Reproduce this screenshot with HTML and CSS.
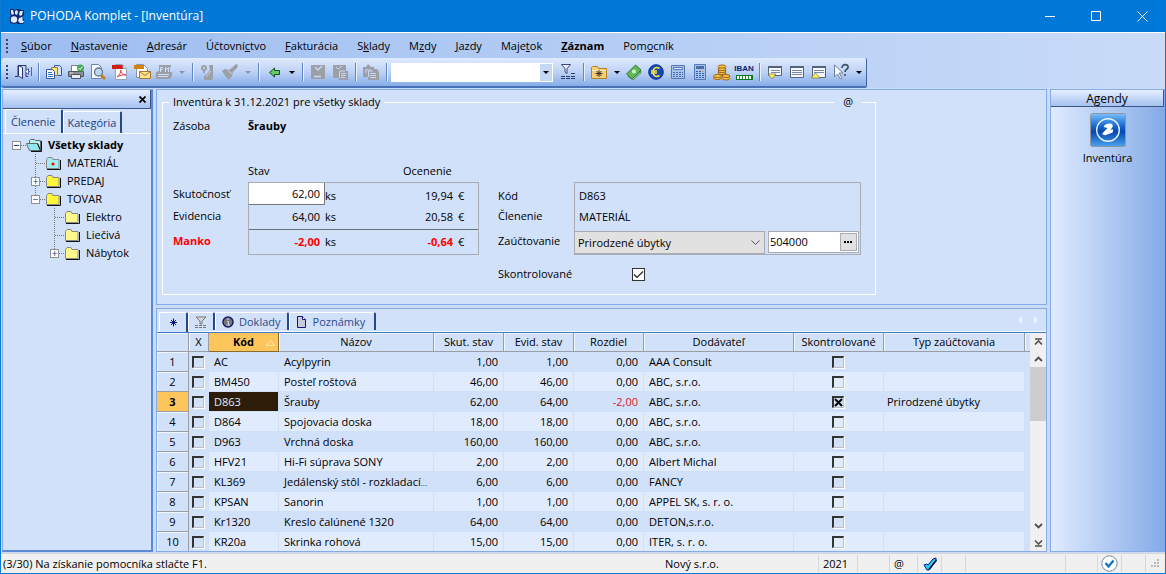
FILE: index.html
```html
<!DOCTYPE html>
<html lang="sk">
<head>
<meta charset="utf-8">
<title>POHODA Komplet - [Inventúra]</title>
<link rel="stylesheet" href="styles.css">
</head>
<body>
<header class="titlebar">
  <svg class="logo" viewBox="0 0 16 16"><path fill="#12286e" d="M1 1h4l1 2 1-2h4l1 1h3v5l-2 2 2 2v3l-1 2H8v-1l-3 1-4-1V9l1-1-1-3z"/><circle cx="5" cy="11.500" r="3.200" fill="#dceaff"/><path fill="#dceaff" d="M2 2h2l1 4-2 1-1-2zM6 3l2-1 1 2-1 3-2-1zM11 3l3 0-1 4-2 1-1-2zM10 10l3-1 1 2-1 1 2 1-1 2h-3l-2-2z"/></svg>
  <h1 class="title">POHODA Komplet - [Inventúra]</h1>
  <div class="window-buttons">
    <button aria-label="Minimalizovať"><svg viewBox="0 0 11 11"><path d="M0 5.500h10" stroke="#fff"/></svg></button>
    <button aria-label="Maximalizovať"><svg viewBox="0 0 11 11"><path d="M.5.5h9v9h-9z" stroke="#fff" fill="none"/></svg></button>
    <button aria-label="Zavrieť"><svg viewBox="0 0 11 11"><path d="M.5.5l10 10M10.500.5l-10 10" stroke="#fff"/></svg></button>
  </div>
</header>

<nav class="menubar">
  <span class="grip"></span>
  <button><u>S</u>úbor</button>
  <button><u>N</u>astavenie</button>
  <button><u>A</u>dresár</button>
  <button>Účtovní<u>c</u>tvo</button>
  <button><u>F</u>akturácia</button>
  <button>S<u>k</u>lady</button>
  <button>M<u>z</u>dy</button>
  <button><u>J</u>azdy</button>
  <button>Maje<u>t</u>ok</button>
  <button class="strong"><u>Z</u>áznam</button>
  <button>Pom<u>o</u>cník</button>
</nav>

<div class="toolbar" role="toolbar">
  <span class="grip"></span>
  <button aria-label="Koniec"><svg viewBox="0 0 18 18"><path d="M1 13.500h3V2.500h8v11h2" fill="none" stroke="#2f3474"/><path d="M4.500 2.500l4 2v11l-4-2.500z" fill="#f4f8ff" stroke="#2f3474"/><path d="M17.500 4v9M16 8.500h-2M14.500 5.500v6l-3.500-3z" fill="#fff" stroke="#4d639c"/></svg></button>
  <span class="sep"></span>
  <button aria-label="Kopírovať"><svg viewBox="0 0 18 18"><path d="M9.500 2.500h5l2 2v8h-7z" fill="#cfe2ff" stroke="#36569b"/><path d="M6.500 4.500h6v8h-6z" fill="#ffe36b" stroke="#97853a"/><path d="M1.500 6.500h6l2 2v7h-8z" fill="#fff" stroke="#36569b"/><path d="M3 9.500h4M3 11.500h5M3 13.500h5" stroke="#2c71d0"/></svg></button>
  <button aria-label="Tlač"><svg viewBox="0 0 18 18"><path d="M4.500 8V2.500h8V8" fill="#fff" stroke="#7a7d86"/><path d="M1.500 8.500h15v5h-15z" fill="#8d9098" stroke="#53565e"/><path d="M4.500 11.500h9v4h-9z" fill="#e8edf5" stroke="#53565e"/><path d="M3 10h3" stroke="#ddd"/><circle cx="13.500" cy="5" r="3.500" fill="#43aa50"/><path d="M11.500 5l1.500 1.500 2.500-3" fill="none" stroke="#fff"/></svg></button>
  <button aria-label="Náhľad"><svg viewBox="0 0 18 18"><path d="M2.500 1.500h7l3 3v11h-10z" fill="#f4f8ff" stroke="#7186ad"/><path d="M12 12l4 4" stroke="#c87f18" stroke-width="2.600"/><circle cx="9.500" cy="9" r="4" fill="#b9daf5" stroke="#687489" stroke-width="1.300"/></svg></button>
  <button aria-label="PDF"><svg viewBox="0 0 18 18"><path d="M4.500 1.500h7l4 4v11h-11z" fill="#fff" stroke="#94a3be"/><path d="M1 2h11v4H1z" fill="#d21c17"/><path d="M12 2v3.500h3.500" fill="#d9dde7" stroke="#94a3be"/><path d="M6 14c3-2 4-5 3.500-7 .5 3 3 5 5.500 5-4-.5-6 .5-9 2z" fill="none" stroke="#df3c45"/></svg></button>
  <button aria-label="Pošta"><svg viewBox="0 0 18 18"><path d="M3.500 1.500h7l4 4v9h-11z" fill="#fff" stroke="#8594b2"/><path d="M1 2h10v4H1z" fill="#d2820d"/><path d="M6.500 8.500h11v7h-11z" fill="#ffe38a" stroke="#a37730"/><path d="M6.500 8.500l5.500 4 5.500-4" fill="none" stroke="#a37730"/></svg></button>
  <button aria-label="Fiškálna tlačiareň" disabled><svg viewBox="0 0 18 18"><path d="M4 2h12v2h-1v5h2v4l-2 3H2l-1-1V9l3-1z" fill="#9c9fa6"/><path d="M5.500 9V4.500H8M5.500 6.500H8M10.500 9V4.500l1.500 2 1.500-2V9M3 11.500h11M3 13.500h10" fill="none" stroke="#d2dff5"/></svg></button>
  <button class="caret off" aria-label="Ďalšie"></button>
  <span class="sep"></span>
  <button aria-label="Akcia" disabled><svg viewBox="0 0 18 18"><circle cx="5" cy="5" r="3" fill="#9c9fa6"/><path d="M4 7h2v3H4zM10 2h4v13l-1 2H5v-4l3-2 3-4z" fill="#9c9fa6"/><circle cx="5" cy="5" r="1" fill="#d2dff5"/><path d="M7 14l5-6" stroke="#c2d4f1"/></svg></button>
  <button aria-label="Upraviť" disabled><svg viewBox="0 0 18 18"><path d="M1 8l3-2 4 1 5-4 2-2 2 1-1 3-4 4-1 4-3 4-3-3z" fill="#9c9fa6"/><path d="M7 8l4 3" stroke="#c2d4f1"/></svg></button>
  <button class="caret off" aria-label="Ďalšie"></button>
  <span class="sep"></span>
  <button aria-label="Späť"><svg viewBox="0 0 18 18"><path d="M4.500 9.500L9.500 5v2.500h5v4h-5V14z" fill="#64c968" stroke="#14501c"/></svg></button>
  <button class="caret" aria-label="História"></button>
  <span class="sep"></span>
  <button aria-label="Uložiť" disabled><svg viewBox="0 0 18 18"><path d="M2 2h14v14H2z" fill="#9c9fa6"/><path d="M6 4l3 3 4-4M5 13.500h7" fill="none" stroke="#c8d8f3" stroke-width="1.500"/></svg></button>
  <button aria-label="Uložiť kópiu" disabled><svg viewBox="0 0 18 18"><path d="M2 2h13v6h2v9H8v-2H2z" fill="#9c9fa6"/><path d="M5 4l2 2 4-3M8.500 15V8H14M10 10.500h5M10 12.500h5M10 14.500h4" fill="none" stroke="#c8d8f3"/></svg></button>
  <span class="sep"></span>
  <button aria-label="Prilepiť" disabled><svg viewBox="0 0 18 18"><path d="M1 4h3l2-3 3 3h3v2h3l2 3v8H6v-3H1z" fill="#9c9fa6"/><path d="M3 7h6M3 9h2M6.500 14V8H11M8 10.500h6M8 12.500h6M8 14.500h6" fill="none" stroke="#c8d8f3"/></svg></button>
  <span class="sep"></span>
  <select class="search" aria-label="Hľadať"><option></option></select>
  <button aria-label="Filter"><svg viewBox="0 0 18 18"><path d="M2.500 1.500h9l-3.500 4v5l-2-1.500V5.500z" fill="#eef4ff" stroke="#3f477f"/><path d="M2 13.500h4M7 13.500h4M12 13.500h4M12 10.500h4M2 15.500h4M7 15.500h4M12 15.500h4" stroke="#31396f"/></svg></button>
  <span class="sep"></span>
  <button aria-label="Obľúbené"><svg viewBox="0 0 18 18"><path d="M1.500 4.500l1-1h5l1 2h8v10h-15z" fill="#f7cf72" stroke="#b5832c"/><path d="M2 7.500h14" stroke="#fff0b8"/><path d="M9 7v7M5.500 10.500h7M6.500 8l5 5M11.500 8l-5 5" stroke="#3b3034"/></svg></button>
  <button class="caret" aria-label="Ďalšie"></button>
  <button aria-label="Pokladňa"><svg viewBox="0 0 18 18"><path d="M1.500 11L10.500 2l5.500 5-9 9z" fill="#5fb95c" stroke="#2e7a38"/><path d="M3 12.500l4 3.500L16 8v2l-8 7-5-3.500z" fill="#8bcf80" stroke="#2e7a38" stroke-width=".6"/><circle cx="9" cy="8.500" r="2" fill="#d6f4c8"/></svg></button>
  <button aria-label="Euro"><svg viewBox="0 0 18 18"><circle cx="9" cy="9" r="7.300" fill="#1549ba" stroke="#0c2e8b"/><path d="M12.500 5.500C8.500 3 6 6 6 9s2.500 6 6.500 3.500M4 8h6M4 10h6" fill="none" stroke="#ffe53b" stroke-width="1.500"/></svg></button>
  <button aria-label="Kalkulačka"><svg viewBox="0 0 18 18"><path d="M2.500 2.500h13v13h-13z" fill="#a9c3ef" stroke="#5579b8"/><path d="M4.500 4.500h9v2h-9z" fill="#e8f1ff" stroke="#5579b8"/><path d="M4 9.500h10M4 11.500h10M4 13.500h10" stroke="#416bb0" stroke-dasharray="2 1"/></svg></button>
  <button aria-label="Počítadlo"><svg viewBox="0 0 18 18"><path d="M3.500 1.500h11v15h-11z" fill="#a9c3ef" stroke="#5579b8"/><path d="M5 3h8v3H5z" fill="#4f6f9e"/><path d="M5 8.500h8M5 10.500h8M5 12.500h8M5 14.500h8" stroke="#2e63af" stroke-dasharray="2 1"/><path d="M11 8.500h2" stroke="#e4a130"/></svg></button>
  <button aria-label="Mince"><svg viewBox="0 0 18 18"><g fill="#ffca43" stroke="#9a621a"><ellipse cx="4.500" cy="15" rx="4" ry="1.500"/><ellipse cx="4.500" cy="13" rx="4" ry="1.500"/><ellipse cx="9" cy="10" rx="4" ry="1.500"/><ellipse cx="9" cy="8" rx="4" ry="1.500"/><ellipse cx="9" cy="6" rx="4" ry="1.500"/><ellipse cx="9" cy="3.500" rx="4" ry="1.500"/><ellipse cx="13" cy="15.500" rx="4" ry="1.500"/><ellipse cx="13" cy="13" rx="4" ry="1.500"/></g></svg></button>
  <button class="iban" aria-label="Kontrola IBAN"><span>IBAN</span><i></i></button>
  <span class="sep"></span>
  <button aria-label="Panel dole"><svg viewBox="0 0 18 18"><path d="M2.500 3.500h13v9h-13z" fill="#f5f8ff" stroke="#56637d"/><path d="M2 4h14" stroke="#56637d" stroke-width="2"/><path d="M5 7.500h9M5 9.500h9" stroke="#7988a5"/><path d="M2 11h8l-4 5z" fill="#fff257" stroke="#6e7047" stroke-width=".7"/></svg></button>
  <button aria-label="Panel"><svg viewBox="0 0 18 18"><path d="M2.500 3.500h13v11h-13z" fill="#f5f8ff" stroke="#56637d"/><path d="M2 4h14" stroke="#56637d" stroke-width="2"/><path d="M4 7.500h10M4 9.500h10M4 11.500h10" stroke="#7988a5"/></svg></button>
  <button aria-label="Panel hore"><svg viewBox="0 0 18 18"><path d="M2.500 3.500h13v11h-13z" fill="#f5f8ff" stroke="#56637d"/><path d="M2 4h14" stroke="#56637d" stroke-width="2"/><path d="M4 7.500h10M4 9.500h10" stroke="#7988a5"/><path d="M1 15h9l-4.500-5z" fill="#fff257" stroke="#6e7047" stroke-width=".7"/></svg></button>
  <button aria-label="Pomocník"><svg viewBox="0 0 18 18"><path d="M2.500 2v12l3-3 3 5 1.500-1-3-5h4z" fill="#fff" stroke="#6f809e"/><path d="M10 5c0-5 7-4 6-.5-.5 2-3 2-3 4.500M13 11v2" fill="none" stroke="#3d5064" stroke-width="1.700"/></svg></button>
  <button class="caret" aria-label="Ďalšie"></button>
</div>

<main class="workspace">
  <aside class="tree-panel">
    <div class="panel-head"><button aria-label="Zavrieť panel"><svg viewBox="0 0 7 7"><path d="M.5.5l6 6M6.500.5l-6 6" stroke="#000" stroke-width="1.700"/></svg></button></div>
    <div class="side-tabs"><button class="active">Členenie</button><button>Kategória</button></div>
    <ul class="tree">
      <li class="strong"><span class="cell h"><button aria-label="Zbaliť">−</button></span><svg class="folder root" viewBox="0 0 17 14"><path d="M3.500 10V2.500l1-1h4l1 1h5V11" fill="#b5f0f5" stroke="#666"/><path d="M.5 5.500h11l3 7h-11z" fill="#8ee9f0" stroke="#666"/><path d="M15.500 3v10.500H5M11.500 5.500l3 7" fill="none" stroke="#111"/></svg>Všetky sklady</li>
      <li><span class="cell"></span><span class="cell v h"></span><svg class="folder" viewBox="0 0 17 14"><path d="M1.500 3.500l1.500-2h4l1 2h6v9h-12.500z" fill="#a3edf1" stroke="#888"/><path d="M15.500 4v9.500H2" fill="none" stroke="#111"/><circle cx="8" cy="8" r="1.600" fill="#f00"/></svg>MATERIÁL</li>
      <li><span class="cell"></span><span class="cell v h"><button aria-label="Rozbaliť">+</button></span><svg class="folder" viewBox="0 0 17 14"><path d="M1.500 3.500l1.500-2h4l1 2h6v9h-12.500z" fill="#fff63c" stroke="#888"/><path d="M15.500 4v9.500H2" fill="none" stroke="#111"/></svg>PREDAJ</li>
      <li><span class="cell"></span><span class="cell v h end"><button aria-label="Zbaliť">−</button></span><svg class="folder" viewBox="0 0 17 14"><path d="M1.500 3.500l1.500-2h4l1 2h6v9h-12.500z" fill="#fff63c" stroke="#888"/><path d="M15.500 4v9.500H2" fill="none" stroke="#111"/></svg>TOVAR</li>
      <li><span class="cell"></span><span class="cell"></span><span class="cell v h"></span><svg class="folder" viewBox="0 0 17 14"><path d="M1.500 3.500l1.500-2h4l1 2h6v9h-12.500z" fill="#fff98c" stroke="#888"/><path d="M15.500 4v9.500H2" fill="none" stroke="#111"/></svg>Elektro</li>
      <li><span class="cell"></span><span class="cell"></span><span class="cell v h"></span><svg class="folder" viewBox="0 0 17 14"><path d="M1.500 3.500l1.500-2h4l1 2h6v9h-12.500z" fill="#fff98c" stroke="#888"/><path d="M15.500 4v9.500H2" fill="none" stroke="#111"/></svg>Liečivá</li>
      <li><span class="cell"></span><span class="cell"></span><span class="cell v h end"><button aria-label="Rozbaliť">+</button></span><svg class="folder" viewBox="0 0 17 14"><path d="M1.500 3.500l1.500-2h4l1 2h6v9h-12.500z" fill="#fff98c" stroke="#888"/><path d="M15.500 4v9.500H2" fill="none" stroke="#111"/></svg>Nábytok</li>
    </ul>
  </aside>

  <section class="center">
    <form class="form-panel">
      <fieldset class="record">
        <legend>Inventúra k 31.12.2021 pre všetky sklady</legend>
        <span class="at">@</span>
        <div class="record-name"><span>Zásoba</span><strong>Šrauby</strong></div>
        <div class="record-heads"><span>Stav</span><span>Ocenenie</span></div>
        <div class="record-body">
          <div class="labels left"><label for="stav">Skutočnosť</label><span>Evidencia</span><strong>Manko</strong></div>
          <div class="stock">
            <div class="stock-row first"><input id="stav" value="62,00"><span>ks</span><span class="num">19,94</span><span>€</span></div>
            <div class="stock-row"><span class="num">64,00</span><span>ks</span><span class="num">20,58</span><span>€</span></div>
            <div class="stock-row total"><strong class="num">-2,00</strong><span>ks</span><strong class="num">-0,64</strong><span>€</span></div>
          </div>
          <div class="labels right"><span>Kód</span><span>Členenie</span><label for="typ">Zaúčtovanie</label></div>
          <div class="details">
            <span>D863</span><span>MATERIÁL</span>
            <div class="posting">
              <select id="typ"><option>Prirodzené úbytky</option></select>
              <div class="account"><input value="504000" aria-label="Účet"><button type="button" aria-label="Vybrať účet"><svg viewBox="0 0 9 2"><path d="M0 0h2v2H0zM3 0h2v2H3zM6 0h2v2H6z"/></svg></button></div>
            </div>
          </div>
        </div>
        <div class="record-check"><label for="kontrola">Skontrolované</label><input type="checkbox" id="kontrola" checked></div>
      </fieldset>
    </form>

    <div class="grid-panel">
      <div class="grid-tabs">
        <button class="active" aria-label="Záznamy"><svg viewBox="0 0 9 9"><path d="M4.500.5v8M1 4.500h7M2 2l5 5M7 2L2 7" stroke="#15158a"/></svg></button>
        <button class="filter" aria-label="Filter"><svg viewBox="0 0 12 12"><path d="M1 1h10L7 5v3H5V5z" fill="#d8d8d8" stroke="#777"/><path d="M0 9.500h12M0 11.500h12" stroke="#777" stroke-dasharray="3 1"/></svg></button>
        <button><svg viewBox="0 0 12 12"><circle cx="6" cy="6" r="5" fill="#777" stroke="#17176e" stroke-width="1.500"/><path d="M6 2v2M5 5.500h1.500V9M4.500 9h3.500" fill="none" stroke="#d5d5e8"/></svg>Doklady</button>
        <button class="notes"><svg viewBox="0 0 12 12"><path d="M1.500.5h5l3 3v8h-8z" fill="#c6cbd5" stroke="#15157d"/><path d="M6.500.5v3h3" fill="#fff" stroke="#15157d"/></svg>Poznámky</button>
        <svg class="tab-arrows" viewBox="0 0 20 8"><path d="M4 0v8L0 4zM16 0v8l4-4z" fill="#eef4fe"/></svg>
      </div>
      <div class="grid-body">
        <table>
          <colgroup><col class="c-no"><col class="c-x"><col class="c-70"><col class="c-name"><col class="c-70"><col class="c-70"><col class="c-70"><col class="c-sup"><col class="c-chk"><col class="c-type"><col></colgroup>
          <thead><tr><th></th><th>X</th><th class="sorted">Kód<svg viewBox="0 0 9 7"><path d="M4.500 1l4 5.500h-8z" fill="none" stroke="#ffe7b0"/></svg></th><th>Názov</th><th>Skut. stav</th><th>Evid. stav</th><th>Rozdiel</th><th>Dodávateľ</th><th>Skontrolované</th><th>Typ zaúčtovania</th><th></th></tr></thead>
          <tbody>
            <tr><th>1</th><td class="mid"><input type="checkbox" aria-label="Označiť AC"></td><td>AC</td><td>Acylpyrin</td><td class="num">1,00</td><td class="num">1,00</td><td class="num">0,00</td><td>AAA Consult</td><td class="mid"><input type="checkbox" aria-label="Skontrolované AC"></td><td></td><td></td></tr>
            <tr><th>2</th><td class="mid"><input type="checkbox" aria-label="Označiť BM450"></td><td>BM450</td><td>Posteľ roštová</td><td class="num">46,00</td><td class="num">46,00</td><td class="num">0,00</td><td>ABC, s.r.o.</td><td class="mid"><input type="checkbox" aria-label="Skontrolované BM450"></td><td></td><td></td></tr>
            <tr class="current"><th>3</th><td class="mid"><input type="checkbox" aria-label="Označiť D863"></td><td class="focus">D863</td><td>Šrauby</td><td class="num">62,00</td><td class="num">64,00</td><td class="num neg">-2,00</td><td>ABC, s.r.o.</td><td class="mid"><input type="checkbox" checked aria-label="Skontrolované D863"></td><td>Prirodzené úbytky</td><td></td></tr>
            <tr><th>4</th><td class="mid"><input type="checkbox" aria-label="Označiť D864"></td><td>D864</td><td>Spojovacia doska</td><td class="num">18,00</td><td class="num">18,00</td><td class="num">0,00</td><td>ABC, s.r.o.</td><td class="mid"><input type="checkbox" aria-label="Skontrolované D864"></td><td></td><td></td></tr>
            <tr><th>5</th><td class="mid"><input type="checkbox" aria-label="Označiť D963"></td><td>D963</td><td>Vrchná doska</td><td class="num">160,00</td><td class="num">160,00</td><td class="num">0,00</td><td>ABC, s.r.o.</td><td class="mid"><input type="checkbox" aria-label="Skontrolované D963"></td><td></td><td></td></tr>
            <tr><th>6</th><td class="mid"><input type="checkbox" aria-label="Označiť HFV21"></td><td>HFV21</td><td>Hi-Fi súprava SONY</td><td class="num">2,00</td><td class="num">2,00</td><td class="num">0,00</td><td>Albert Michal</td><td class="mid"><input type="checkbox" aria-label="Skontrolované HFV21"></td><td></td><td></td></tr>
            <tr><th>7</th><td class="mid"><input type="checkbox" aria-label="Označiť KL369"></td><td>KL369</td><td class="long">Jedálenský stôl - rozkladací<small>...</small></td><td class="num">6,00</td><td class="num">6,00</td><td class="num">0,00</td><td>FANCY</td><td class="mid"><input type="checkbox" aria-label="Skontrolované KL369"></td><td></td><td></td></tr>
            <tr><th>8</th><td class="mid"><input type="checkbox" aria-label="Označiť KPSAN"></td><td>KPSAN</td><td>Sanorin</td><td class="num">1,00</td><td class="num">1,00</td><td class="num">0,00</td><td>APPEL SK, s. r. o.</td><td class="mid"><input type="checkbox" aria-label="Skontrolované KPSAN"></td><td></td><td></td></tr>
            <tr><th>9</th><td class="mid"><input type="checkbox" aria-label="Označiť Kr1320"></td><td>Kr1320</td><td>Kreslo čalúnené 1320</td><td class="num">64,00</td><td class="num">64,00</td><td class="num">0,00</td><td>DETON,s.r.o.</td><td class="mid"><input type="checkbox" aria-label="Skontrolované Kr1320"></td><td></td><td></td></tr>
            <tr><th>10</th><td class="mid"><input type="checkbox" aria-label="Označiť KR20a"></td><td>KR20a</td><td>Skrinka rohová</td><td class="num">15,00</td><td class="num">15,00</td><td class="num">0,00</td><td>ITER, s. r. o.</td><td class="mid"><input type="checkbox" aria-label="Skontrolované KR20a"></td><td></td><td></td></tr>
          </tbody>
        </table>
        <div class="scrollbar">
          <button aria-label="Na začiatok"><svg viewBox="0 0 9 8"><path d="M1 1h7M1 6.500l3.500-3.500L8 6.500" fill="none" stroke="#505050" stroke-width="1.600"/></svg></button>
          <button aria-label="Hore"><svg viewBox="0 0 9 8"><path d="M1 6l3.500-3.500L8 6" fill="none" stroke="#505050" stroke-width="1.800"/></svg></button>
          <div class="track"><div class="thumb"></div></div>
          <button aria-label="Dole"><svg viewBox="0 0 9 8"><path d="M1 2l3.500 3.500L8 2" fill="none" stroke="#505050" stroke-width="1.800"/></svg></button>
          <button aria-label="Na koniec"><svg viewBox="0 0 9 8"><path d="M1 7h7M1 1.500L4.500 5 8 1.500" fill="none" stroke="#505050" stroke-width="1.600"/></svg></button>
        </div>
      </div>
    </div>
  </section>

  <aside class="agenda">
    <h2>Agendy</h2>
    <button>
      <svg viewBox="0 0 36 34"><defs><linearGradient id="tile" x2="0" y2="1"><stop offset="0" stop-color="#7cc0fa"/><stop offset=".35" stop-color="#1f6fd6"/><stop offset=".55" stop-color="#0447ae"/><stop offset="1" stop-color="#4ba3ef"/></linearGradient></defs><rect x=".5" y=".5" width="35" height="33" rx="2" fill="url(#tile)" stroke="#8d98a3"/><circle cx="18" cy="17" r="11.300" fill="none" stroke="#e8f4ff" stroke-width="1.400"/><path d="M14.500 13.500c1-2 5-3 7-2 1.500 1 .5 3.500-3.500 6.500l4.500-.8-.5 1.800-7 2.500-2-.7 6-6.300z" fill="#fff" stroke="#fff" stroke-width="1.400" stroke-linejoin="round"/></svg>
      <span>Inventúra</span>
    </button>
  </aside>
</main>

<footer class="statusbar">
  <span class="hint">(3/30) Na získanie pomocníka stlačte F1.</span>
  <span class="company">Nový s.r.o.</span>
  <span class="w39 year">2021</span>
  <span class="w32"></span>
  <span class="w28 at-cell">@</span>
  <span class="w24"><svg viewBox="0 0 14 14"><path d="M1 8l3-1 1 1 5-6 3-1v3l-7 9H4z" fill="#21d0f0" stroke="#10108a"/><path d="M6 12.500l7.500-9.500" stroke="#06064a" stroke-width="1.500"/></svg></span>
  <span class="w24"></span>
  <span class="w100"></span>
  <span class="w32"></span>
  <span class="w24"><svg class="ok" viewBox="0 0 17 17"><circle cx="8.500" cy="8.500" r="7.700" fill="#fff" stroke="#76889b"/><path d="M4.500 8l3 3.500 5-6" fill="none" stroke="#1677bd" stroke-width="2.400"/></svg></span>
  <span class="w24"></span>
  <span class="w20"><svg class="size" viewBox="0 0 9 9"><path d="M6 0h2v2H6zM3 3h2v2H3zM6 3h2v2H6zM0 6h2v2H0zM3 6h2v2H3zM6 6h2v2H6z" fill="#b8b8b8"/></svg></span>
</footer>
</body>
</html>
```
FILE: styles.css
```css
* { box-sizing: border-box; }
html, body { height: 100%; margin: 0; }
body {
  display: flex;
  flex-direction: column;
  font: 11px/18px "Open Sans", "Noto Sans", sans-serif;
  color: #000;
  border: solid #1079d0;
  border-width: 0 1px 1px;
  background: linear-gradient(90deg, #9dbdf0, #c9dbf8);
}
button, input, select { font: inherit; color: inherit; margin: 0; padding: 0; }
button { background: none; border: 0; }
.strong { font-weight: 700; }
.num { text-align: right; }

/* Title bar */
.titlebar { display: flex; align-items: center; height: 32px; flex: none; background: #0078d7; color: #fff; padding-left: 8px; }
.logo { width: 16px; height: 16px; }
.title { margin: 0 0 0 5px; font-size: 12px; font-weight: 400; flex: 1; }
.window-buttons { display: flex; }
.window-buttons button { width: 46px; height: 31px; display: grid; place-items: center; }
.window-buttons svg { width: 11px; height: 11px; }

/* Menu */
.menubar { display: flex; align-items: center; height: 26px; flex: none; border-top: 1px solid #fff; padding-left: 5px; }
.menubar button { padding: 0 10px 0 9px; line-height: 18px; }
.grip { width: 6px; height: 14px; background: repeating-linear-gradient(#34456e 0 2px, transparent 2px 4px) 0 0 / 2px 100% no-repeat; }

/* Toolbar */
.toolbar { display: flex; align-items: center; align-self: flex-start; height: 30px; flex: none; padding: 0 1px 0 5px; border-right: 1px solid #3f62a5; border-bottom: 2px solid #4a70b6; border-radius: 4px 2px 2px 4px; background: linear-gradient(#dfeafd, #bdd2f6 50%, #86ade8); }
.toolbar button { width: 22px; height: 24px; display: grid; place-items: center; }
.toolbar button svg { width: 18px; height: 18px; }
.toolbar .sep { width: 1px; height: 18px; margin: 0 4px; background: #6286c4; box-shadow: 1px 0 #e8f1ff; }
.toolbar .caret { width: 13px; }
.caret::before { content: ""; border: solid transparent; border-width: 3px 3px 0; border-top-color: #000; }
.caret.off::before { border-top-color: #8f949e; }
.search { appearance: none; width: 162px; height: 19px; margin-right: 4px; border: 1px solid #fff; border-radius: 0;
  background: url("data:image/svg+xml,%3Csvg xmlns='http://www.w3.org/2000/svg' width='12' height='17'%3E%3Cpath fill='%23c3d8f7' d='M0 0h12v17H0z'/%3E%3Cpath d='M3 7h6L6 10z'/%3E%3C/svg%3E") right / 12px 17px no-repeat #fff; }
.toolbar .iban { align-content: center; justify-items: center; gap: 1px; color: #111d70; font: 700 8px/10px "Liberation Sans", sans-serif; }
.iban i { width: 17px; height: 5px; border: 1px solid #0b7622; background: repeating-linear-gradient(90deg, #fff 0 2px, #168a30 2px 3px); }

/* Work area */
.workspace { display: flex; flex: 1; min-height: 0; gap: 3px; padding: 1px 0 1px 1px; background: #c8dbf8; }

.tree-panel { width: 151px; flex: none; display: flex; flex-direction: column; background: #d1e1f9; border: 1px solid #86abe6; border-right: 2px solid #5c8ad4; border-bottom: 2px solid #5c8ad4; }
.panel-head { height: 19px; display: flex; justify-content: flex-end; align-items: center; padding-right: 4px; background: linear-gradient(#e6effe, #a5c2f0); border: solid #3d5587; border-width: 0 1px 1px 0; }
.panel-head button, .panel-head svg { width: 7px; height: 7px; display: block; }
.side-tabs { display: flex; align-items: flex-end; height: 25px; padding-left: 2px; border-bottom: 1px solid #fff; color: #203f82; }
.side-tabs button { height: 22px; padding: 0 4px; border: solid #fff; border-width: 1px 2px 0 1px; border-right-color: #234987; border-radius: 2px 2px 0 0; white-space: nowrap; }
.side-tabs .active { height: 24px; padding: 0 5px; }
.tree { list-style: none; margin: 0; padding: 2px 0 0 4px; }
.tree li { display: flex; align-items: center; height: 18px; }
.cell { width: 19px; height: 18px; display: grid; place-items: center; background-repeat: no-repeat; }
.cell.h { background-image: repeating-linear-gradient(90deg, #777 0 1px, transparent 1px 2px); background-size: 9px 1px; background-position: 10px 9px; }
.cell.v { background-image: repeating-linear-gradient(#777 0 1px, transparent 1px 2px), repeating-linear-gradient(90deg, #777 0 1px, transparent 1px 2px); background-size: 1px 18px, 9px 1px; background-position: 9px 0, 10px 9px; }
.cell.end { background-size: 1px 9px, 9px 1px; }
.cell button { width: 9px; height: 9px; border: 1px solid #909090; background: #fff; color: #203f82; font-size: 10px; line-height: 7px; display: grid; place-items: center; }
.folder { width: 17px; height: 14px; margin-right: 5px; }

.center { flex: 1; min-width: 0; display: flex; flex-direction: column; gap: 3px; }
.form-panel, .grid-panel { border: 1px solid #86abe6; background: #d1e1f9; }
.form-panel { padding: 3px 5px 9px; }
.record { position: relative; max-width: 714px; min-width: 0; margin: 0; border: 1px solid #fff; padding: 6px 10px 11px; }
.record legend { padding: 0 4px; margin-left: -4px; line-height: 18px; }
.at { position: absolute; top: -18px; right: 13px; padding: 0 9px; background: #d1e1f9; }
.record-name, .record-heads { display: flex; }
.record-name span { width: 75px; }
.record-heads { padding: 27px 0 2px 75px; }
.record-heads span { width: 155px; }
.record-body { display: grid; grid-template-columns: 75px 231px 95px 287px; }
.labels { display: grid; grid-template-rows: 24px 20px 1fr; align-items: center; }
.labels strong, .stock strong { color: #f00; }
.labels.right { margin-left: 19px; padding-top: 4px; grid-template-rows: 20px 20px 1fr; }
.stock, .details { height: 73px; border: 1px solid #a8acb4; }
.stock-row { display: grid; grid-template-columns: 71px 30px 1fr 10px; column-gap: 5px; align-items: center; height: 20px; padding-right: 10px; }
.stock-row.first { grid-template-columns: 76px 30px 1fr 10px; column-gap: 0; height: 24px; }
.stock-row.first span { padding-top: 2px; }
.stock-row.first .num { padding-right: 5px; }
.stock-row.total { height: 24px; margin-top: 2px; border-top: 1px solid #6b7077; }
.stock input { width: 76px; height: 22px; align-self: start; border: solid #777; border-width: 0 1px 1px 0; background: #fff; text-align: right; padding-right: 4px; }
.details { display: grid; grid-template-rows: 26px 16px 1fr; align-items: center; }
.details > span { padding-left: 4px; }
.posting { display: flex; gap: 3px; height: 23px; padding-right: 1px; align-self: end; }
.posting select { flex: 1; appearance: none; border: 1px solid #a8acb4; border-left: 0; border-radius: 0; padding-left: 3px;
  background: url("data:image/svg+xml,%3Csvg xmlns='http://www.w3.org/2000/svg' width='9' height='6'%3E%3Cpath d='M.5.5l4 4 4-4' fill='none' stroke='%23555'/%3E%3C/svg%3E") right 4px center / 9px 6px no-repeat #e1e1e1; }
.account { display: flex; width: 91px; border: 1px solid #a8acb4; background: #fff; height: 22px; }
.account input { flex: 1; min-width: 0; border: 0; padding-left: 1px; background: none; }
.account button { width: 17px; margin: 1px; border: 1px solid #a8acb4; background: #e1e1e1; display: grid; place-items: center; }
.account svg { width: 9px; height: 2px; }
.record-check { display: flex; align-items: center; margin-top: 10px; padding-left: 325px; }
.record-check label { width: 134px; }
.record-check input { appearance: none; width: 13px; height: 13px; border: 1px solid #333; background: url("data:image/svg+xml,%3Csvg xmlns='http://www.w3.org/2000/svg' width='11' height='11'%3E%3Cpath d='M1 5.500l3 3 6-6' fill='none' stroke='%23222' stroke-width='1.200'/%3E%3C/svg%3E") center / 11px 11px no-repeat #fff; }

/* Record list */
.grid-panel { flex: 1; min-height: 0; display: flex; flex-direction: column; }
.grid-tabs { display: flex; align-items: flex-start; height: 24px; flex: none; padding: 3px 0 0 2px; border-bottom: 1px solid #4377c9; box-shadow: inset 0 -1px #fff; color: #2d4b8c; }
.grid-tabs button { display: flex; align-items: center; justify-content: center; gap: 5px; height: 18px; padding: 0 6px; border: solid #fff; border-width: 1px 2px 0 1px; border-right-color: #234987; border-radius: 2px 2px 0 0; }
.grid-tabs .notes { padding-right: 9px; }
.grid-tabs .active { width: 29px; height: 20px; background: #d1e1f9; }
.grid-tabs svg { width: 12px; height: 12px; }
.grid-tabs .active svg { width: 9px; height: 9px; }
.grid-tabs .tab-arrows { width: 20px; height: 8px; margin: 4px 8px 0 auto; }
.grid-body { flex: 1; min-height: 0; display: flex; overflow: hidden; }
table { flex: 1; width: 100%; min-width: 0; align-self: flex-start; table-layout: fixed; border-collapse: separate; border-spacing: 0; background: #d1e1f9; }
.c-no { width: 32px; } .c-x { width: 20px; } .c-70 { width: 70px; } .c-name { width: 155px; } .c-sup { width: 150px; } .c-chk { width: 90px; } .c-type { width: 141px; }
th, td { height: 20px; padding: 0 5px; line-height: 18px; white-space: nowrap; overflow: hidden; text-align: left; }
th { font-weight: 400; text-align: center; padding: 0; border: solid #9a9da3; border-width: 0 1px 1px 0; box-shadow: inset 1px 1px #f0f6ff; }
thead th { height: 19px; }
thead th:last-child { border-right: 0; }
thead .sorted { background: #fcc65c; font-weight: 700; box-shadow: none; border-color: #8c6c2d; }
.sorted svg { width: 9px; height: 7px; margin: 0 -21px 0 12px; }
td { border-right: 1px solid #d0e0f8; border-bottom: 1px solid #d0e0f8; }
td.mid { padding: 0 2px 0 0; }
tbody tr:nth-child(even) td:not(:last-child) { background: #e0ebfe; }
tbody td:nth-child(2) { background: #d1e1f9 !important; }
.current th { background: #fcc65c; font-weight: 700; box-shadow: none; }
td.focus { background: #2d1c07; color: #e0ebfe; }
td:nth-child(10) { padding-left: 3px; }
td.num { text-align: right; }
td.neg { color: #d9202b; }
td.long { padding-right: 0; }
td small { font-size: 8px; line-height: 8px; color: #15158a; }
td input { appearance: none; display: block; width: 12px; height: 12px; margin: 0 auto; border: solid; border-width: 2px 1px 1px 2px; border-color: #333 #c0c0c0 #c0c0c0 #333; box-shadow: 1px 1px #fff; }
td input:checked { background: url("data:image/svg+xml,%3Csvg xmlns='http://www.w3.org/2000/svg' width='9' height='9'%3E%3Cpath d='M1 1l7 7M8 1L1 8' stroke='%23000' stroke-width='2'/%3E%3C/svg%3E") center / 9px 9px no-repeat; }
.scrollbar { width: 16px; flex: none; display: flex; flex-direction: column; background: #f0f0f0; }
.scrollbar button { height: 17px; display: grid; place-items: center; }
.scrollbar svg { width: 9px; height: 8px; }
.track { flex: 1; }
.thumb { height: 54px; background: #cdcdcd; }

/* Agendas */
.agenda { width: 115px; flex: none; border: 1px solid #86abe6; background: linear-gradient(90deg, #e0ebff, #84abe7); }
.agenda h2 { margin: 0; height: 17px; font-size: 12px; font-weight: 400; line-height: 17px; text-align: center; background: linear-gradient(#e6effe, #a5c2f0); border: solid #3d5587; border-width: 0 1px 1px 0; }
.agenda button { display: flex; flex-direction: column; align-items: center; width: 100%; padding-top: 6px; gap: 2px; }
.agenda svg { width: 36px; height: 34px; }

/* Status bar */
.statusbar { display: flex; flex: none; height: 20px; border-top: 1px solid #d7d7d7; background: #f0f0f0; padding: 1px 0 1px 2px; }
.statusbar span { display: flex; align-items: center; justify-content: center; white-space: nowrap; }
.statusbar .hint { flex: 1; justify-content: flex-start; }
.statusbar .company { width: 153px; justify-content: flex-start; }
.statusbar span + span + span { border-left: 1px solid #d7d7d7; }
.statusbar svg { width: 14px; height: 14px; }
.statusbar .ok { width: 17px; height: 17px; }
.statusbar .size { width: 9px; height: 9px; }
.w20 { width: 20px; } .w24 { width: 24px; } .w28 { width: 28px; } .w32 { width: 32px; } .w39 { width: 39px; } .w100 { width: 100px; }
.statusbar .year { justify-content: flex-start; padding-left: 4px; }
.statusbar .at-cell { justify-content: flex-start; padding-left: 4px; }
```
